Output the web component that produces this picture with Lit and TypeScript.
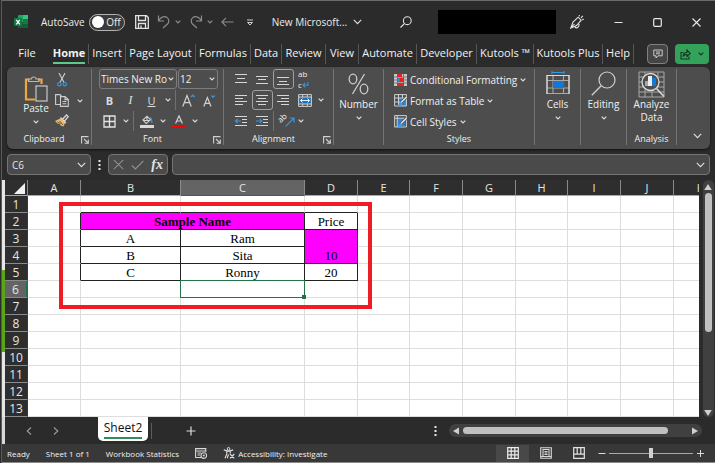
import { LitElement, html, css, svg, nothing } from "lit";
import { customElement, property } from "lit/decorators.js";
import { classMap } from "lit/directives/class-map.js";
import { styleMap } from "lit/directives/style-map.js";

type Art = { w: number; h: number; body: unknown };

const line = (d: string, c = "#d6d6d6", w = 1) =>
  svg`<path d=${d} fill="none" stroke=${c} stroke-width=${w} />`;
const fill = (d: string, c = "#d6d6d6") => svg`<path d=${d} fill=${c} />`;

const ART: Record<string, Art> = {
  excel: { w: 14, h: 14, body: svg`
    <rect x="4" y="0" width="10" height="13" rx="1" fill="#21a366" />
    <rect x="9" y="0" width="5" height="4" fill="#33c481" />
    <rect x="4" y="7" width="10" height="6" rx="1" fill="#185c37" />
    <rect x="9" y="4" width="5" height="5" fill="#107c41" />
    <rect x="0" y="3" width="8" height="8" rx="1" fill="#107c41" />
    ${line("M2.3 4.8 5.8 9.3M5.8 4.8 2.3 9.3", "#fff", 1.3)}` },
  save: { w: 14, h: 14, body: svg`
    ${line("M.7 .7H11.5L13.3 2.5V13.3H.7ZM3.5 .7V5.5H10.5V.7M3.5 13V8.5H10.5V13M6 13V10.5", "#e4e4e4", 1.3)}` },
  undo: { w: 14, h: 14, body: line("M1.5 .5V6H7M1.5 6C4 1.5 8 .8 10.2 2.6 12.5 4.5 12 7.5 10.5 9L6 13", "#8c8c8c", 1.2) },
  redo: { w: 14, h: 14, body: line("M12.5 .5V6H7M12.5 6C10 1.5 6 .8 3.8 2.6 1.5 4.5 2 7.5 3.5 9L8 13", "#8c8c8c", 1.2) },
  back: { w: 13, h: 10, body: line("M5 .8 .9 5 5 9.2M.9 5H12.5", "#8c8c8c", 1.1) },
  custom: { w: 8, h: 7, body: line("M1 1H7M1.5 3.5 4 6 6.5 3.5Z", "#d0d0d0") },
  search: { w: 12, h: 12, body: svg`<circle cx="7.3" cy="4.7" r="3.9" fill="none" stroke="#e0e0e0" stroke-width="1.1" />${line("M4.4 7.6 .5 11.5", "#e0e0e0", 1.2)}` },
  pen: { w: 14, h: 14, body: line("M.8 13 3 7 8.2 2.2 11.2 5.2 6.5 10.5ZM.8 13 4.5 9M4.8 12C6.5 13.8 9.5 12.5 9 9M9 1.2 9.6 0M11 2.8 12.8 .8M12.2 4.6 13.8 4.2", "#e4e4e4", 1.1) },
  min: { w: 9, h: 9, body: line("M.5 4.5H8.5", "#e8e8e8") },
  max: { w: 9, h: 9, body: svg`<rect x=".7" y=".7" width="7.6" height="7.6" rx="1" fill="none" stroke="#e8e8e8" stroke-width="1.2" />` },
  close: { w: 9, h: 9, body: line("M.5 .5 8.5 8.5M8.5 .5 .5 8.5", "#e8e8e8", 1.1) },
  comment: { w: 10, h: 10, body: line("M.8 1H9.2V6.8H5L3 9V6.8H.8ZM3 3H7M3 4.8H7", "#d8d8d8", 0.9) },
  share: { w: 11, h: 11, body: line("M3.5 3.5H1V10H9V7.5M3 7.5C3.5 4.5 5 3.5 7 3.5V1L10.3 4.5 7 7.5V5.5C5.5 5.5 4 6 3 7.5Z", "#14351f", 1.1) },
  paste: { w: 24, h: 26, body: svg`
    ${line("M5.5 3.5H2V23.5H11", "#f0a63c", 2.2)}${line("M14 3.5H17.5V8", "#f0a63c", 2.2)}
    ${line("M4.5 5.5V3H7.5C7.5 .3 12 .3 12 3H15V5.5Z", "#b8b8b8", 1.1)}
    <rect x="12" y="10" width="11" height="15" fill="#4d4d4d" stroke="#c8c8c8" stroke-width="1.2" />` },
  cut: { w: 10, h: 14, body: svg`${line("M2 0 7 9.5M8 0 3 9.5", "#cfcfcf", 1.1)}
    <circle cx="2.3" cy="11.2" r="1.7" fill="none" stroke="#3b96dc" stroke-width="1.2" /><circle cx="7.7" cy="11.2" r="1.7" fill="none" stroke="#3b96dc" stroke-width="1.2" />` },
  copy: { w: 14, h: 13, body: line("M6 10.5H.6V.6H5L7 2.6M5.5 2.6H10L13.3 5.6V12.4H5.5ZM10 2.6V5.6H13.3M7.5 7.5H11.3M7.5 9.8H11.3", "#cdcdcd", 1.1) },
  brush: { w: 14, h: 13, body: svg`${fill("M2 6 6.5 4 10.5 8 8.5 12.6 5.5 11.5 4.5 10 2.5 9.5 0 7Z", "#f0b45a")}
    ${line("M5.5 3.5 11 9M7.5 5.2 11.5 1 13.2 2.6 9.5 7", "#d6d6d6", 1.3)}${line("M2.5 8 6 10M4.5 7 8 11", "#4d4d4d", 0.8)}` },
  launch: { w: 8, h: 8, body: line("M7.5 .6H.6V7.5M3 3 7 7M7.3 3.6V7.3H3.6", "#d0d0d0", 1.1) },
  grow: { w: 13, h: 13, body: svg`${line("M.8 12.5 5 1.5 9.2 12.5M2.3 8.7H7.7", "#d0d0d0", 1.2)}${line("M9 3 10.8 1.2 12.6 3", "#3b96dc", 1.3)}` },
  shrink: { w: 13, h: 13, body: svg`${line("M.8 12.5 4.4 3.5 8 12.5M2.2 9.4H6.6", "#d0d0d0", 1.2)}${line("M8.3 1.5 10 3.2 11.7 1.5", "#3b96dc", 1.3)}` },
  borders: { w: 13, h: 13, body: line("M1 1H12V12H1ZM6.5 1V12M1 6.5H12", "#e4e4e4", 1.3) },
  bucket: { w: 14, h: 13, body: svg`${line("M3 5 7 1.2 10.5 4.8 6.2 8.5ZM7 1.2V5M3 5.5H9.5", "#cfcfcf", 1.1)}
    ${line("M10 2.5C12 3.5 12 5.5 11.8 8", "#3b96dc", 1.3)}<rect x="0" y="10" width="14" height="3" fill="#d8d8d8" />` },
  fontColor: { w: 14, h: 13, body: svg`${line("M3.6 8.5 7 .8 10.4 8.5M4.8 6H9.2", "#d0d0d0", 1.2)}<rect x="0" y="10" width="14" height="3" fill="#f00" />` },
  top: { w: 13, h: 13, body: line("M0 1.5H12M2 5.5H10M0 9.5H12") },
  middle: { w: 13, h: 13, body: line("M0 3.5H12M2 6.5H10M0 10.5H12") },
  bottom: { w: 13, h: 13, body: line("M0 4.5H12M2 8.5H10M0 11.5H12") },
  left: { w: 13, h: 13, body: line("M0 1.5H12M0 4.5H8M0 7.5H12M0 10.5H8") },
  center: { w: 13, h: 13, body: line("M0 1.5H12M2 4.5H10M0 7.5H12M2 10.5H10") },
  right: { w: 13, h: 13, body: line("M0 1.5H12M4 4.5H12M0 7.5H12M4 10.5H12") },
  outdent: { w: 13, h: 13, body: svg`${line("M0 1.5H12M7 4.5H12M7 7.5H12M0 10.5H12")}${line("M2.7 3.8 .5 6 2.7 8.2M.5 6H6", "#3b96dc", 1.2)}` },
  indent: { w: 13, h: 13, body: svg`${line("M0 1.5H12M7 4.5H12M7 7.5H12M0 10.5H12")}${line("M3.8 3.8 6 6 3.8 8.2M0 6H6", "#3b96dc", 1.2)}` },
  wrapArrow: { w: 7, h: 6, body: line("M6 0V3.2H1.2M3.2 1 1 3.2 3.2 5.4", "#3b96dc", 1.1) },
  orientArrow: { w: 10, h: 10, body: line("M.6 9.4 9 1M4.5 1H9V5.5", "#3b96dc", 1.2) },
  merge: { w: 14, h: 13, body: svg`<rect x="0" y="3" width="14" height="7" fill="#1f6fb8" />
    ${line("M.6 .6H13.4V12.4H.6ZM.6 3H13.4M.6 10H13.4M4.7 .6V3M9.3 .6V3M4.7 10V12.4M9.3 10V12.4", "#cfcfcf")}
    ${line("M4.5 4.5 2.5 6.5 4.5 8.5M9.5 4.5 11.5 6.5 9.5 8.5M2.5 6.5H11.5", "#e8f3ff")}` },
  percent: { w: 21, h: 24, body: svg`<ellipse cx="5" cy="8" rx="3.8" ry="4.8" fill="none" stroke="#cfcfcf" stroke-width="1.3" />
    <ellipse cx="16" cy="18" rx="3.8" ry="4.8" fill="none" stroke="#cfcfcf" stroke-width="1.3" />${line("M16.5 3 4.5 23", "#cfcfcf", 1.3)}` },
  conditional: { w: 13, h: 12, body: svg`<rect x="0" y="0" width="13" height="12" fill="#c9c9c9" />
    ${line("M0 3H13M0 6H13M0 9H13M3.5 0V12M9.5 0V12", "#666", 0.8)}
    <rect x="3" y="0" width="5" height="3" fill="#f21d1d" /><rect x="3" y="4" width="3" height="4" fill="#2a7fd0" /><rect x="6" y="4" width="4" height="4" fill="#f21d1d" /><rect x="3" y="9" width="7" height="3" fill="#f21d1d" />` },
  tableStyle: { w: 13, h: 13, body: svg`<rect x="4" y="4" width="9" height="8" fill="#2a84d6" />
    ${line("M.6 .6H12.4V12H.6ZM.6 4H12.4M.6 8H7M4.5 .6V12M8.5 .6V4", "#d0d0d0")}${line("M12.6 3 6.5 9", "#4d4d4d", 3)}${line("M12.6 3 6.5 9", "#e4e4e4", 1.5)}${fill("M6.8 7.8 8.4 9.8C7.5 12.5 5 12.8 3 12.4 5 11.5 4.8 8.5 6.8 7.8Z", "#3f9bea")}` },
  cellStyle: { w: 13, h: 13, body: svg`<rect x="3" y="3" width="8" height="8" fill="#2a84d6" />
    ${line("M.6 .6H12.4V12H.6ZM.6 3.2H12.4M3.2 .6V12", "#d0d0d0")}${line("M12.6 3 6.5 9", "#4d4d4d", 3)}${line("M12.6 3 6.5 9", "#e4e4e4", 1.5)}${fill("M6.8 7.8 8.4 9.8C7.5 12.5 5 12.8 3 12.4 5 11.5 4.8 8.5 6.8 7.8Z", "#3f9bea")}` },
  cells: { w: 24, h: 23, body: svg`${line("M6 1.5H18M6 0V3M18 0V3", "#3b96dc", 1.1)}
    ${line("M1 4.5H23V22.5H1ZM1 9.5H23M1 17H23M7 4.5V22.5M17.5 4.5V22.5", "#a8a8a8", 1.1)}${line("M1 4V23M23 4V23M1 4.5H23", "#dadada", 1.2)}
    <rect x="7" y="10" width="11" height="7" fill="#1178d4" />` },
  editing: { w: 25, h: 25, body: svg`<circle cx="16" cy="9" r="8" fill="none" stroke="#cfcfcf" stroke-width="1.2" />${line("M10.2 14.8 .8 24.2", "#cfcfcf", 1.3)}` },
  analyze: { w: 27, h: 27, body: svg`${line("M1 1H26V26H1ZM1 6H26M1 16H6M18 16H26M1 21H26M7 18V26M14 21V26M20 1V5M7 1V5M1 11H5M21 11H26", "#a8a8a8", 1)}
    <circle cx="12.5" cy="11" r="8.5" fill="#4d4d4d" stroke="#dcdcdc" stroke-width="1.3" />${line("M18.5 17.5 26 25.5", "#dcdcdc", 1.5)}
    <rect x="7" y="10" width="3" height="5" fill="#a8a8a8" /><rect x="10" y="5" width="4" height="10" fill="#ededed" /><rect x="14" y="7" width="4" height="8" fill="#1178d4" />` },
  chevron: { w: 6, h: 4, body: line("M.7 .7 3 3 5.3 .7", "#dcdcdc", 1.2) },
  dimChevron: { w: 6, h: 4, body: line("M.7 .7 3 3 5.3 .7", "#8c8c8c", 1.2) },
  darkChevron: { w: 6, h: 4, body: line("M.7 .7 3 3 5.3 .7", "#14351f", 1.2) },
  wideChevron: { w: 9, h: 6, body: line("M.8 .8 4.5 4.6 8.2 .8", "#dcdcdc", 1.2) },
  cancel: { w: 11, h: 11, body: line("M.8 .8 10.2 10.2M10.2 .8 .8 10.2", "#8f8f8f", 1.1) },
  accept: { w: 13, h: 10, body: line("M.8 5.5 4.4 9 12.4 .8", "#8f8f8f", 1.2) },
  dots: { w: 3, h: 10, body: fill("M.5 0h2v2h-2zM.5 4h2v2h-2zM.5 8h2v2h-2z", "#e8e8e8") },
  prev: { w: 6, h: 8, body: line("M5 .5 1.2 4 5 7.5", "#9a9a9a", 1.1) },
  next: { w: 6, h: 8, body: line("M1 .5 4.8 4 1 7.5", "#9a9a9a", 1.1) },
  plus: { w: 10, h: 10, body: line("M5 .5V9.5M.5 5H9.5", "#dcdcdc", 1.2) },
  zoomOut: { w: 8, h: 8, body: line("M.5 4.5H7.5", "#dcdcdc") },
  zoomIn: { w: 8, h: 8, body: line("M4.5 1V8M1 4.5H8", "#dcdcdc") },
  triLeft: { w: 6, h: 8, body: fill("M6 .5V7.5L0 4Z", "#cfcfcf") },
  triRight: { w: 6, h: 8, body: fill("M0 .5V7.5L6 4Z", "#cfcfcf") },
  triUp: { w: 8, h: 6, body: fill("M4 0 7.8 6H.2Z", "#cfcfcf") },
  triDown: { w: 8, h: 6, body: fill("M4 6 7.8 0H.2Z", "#cfcfcf") },
  corner: { w: 11, h: 11, body: fill("M11 0V11H0Z", "#f2f2f2") },
  macro: { w: 12, h: 11, body: svg`${line("M6 9.5H.6V.6H10.8V4M.6 3H10.8M2.5 5H6M2.5 7H5", "#d8d8d8", 1.1)}<circle cx="8.8" cy="7.6" r="2.8" fill="none" stroke="#d8d8d8" stroke-width="1.1" /><circle cx="8.8" cy="7.6" r="1" fill="#d8d8d8" />` },
  access: { w: 12, h: 12, body: svg`<circle cx="5.5" cy="1.8" r="1.3" fill="none" stroke="#e0e0e0" />${line("M.8 2.8C3 4.5 8 4.5 10.2 2.8M3.8 4.2V7L2 11.3M7.2 4.2V6.5M5.5 7.5 4.2 11.3M7 7 11.3 11.3M11.3 7 7 11.3", "#e0e0e0", 1.1)}` },
  normalView: { w: 12, h: 12, body: line("M.7 .7H11.3V11.3H.7ZM.7 4.2H11.3M.7 7.8H11.3M4.2 .7V11.3M7.8 .7V11.3", "#ececec", 1.2) },
  pageView: { w: 12, h: 12, body: line("M.7 .7H11.3V11.3H.7ZM3 2.5H9V9.5H3ZM4.5 4.5H7.5M4.5 6H7.5M4.5 7.5H7.5M.7 9.5H3M9 9.5H11.3", "#d8d8d8", 1.1) },
  breakView: { w: 12, h: 12, body: line("M.7 .7H11.3V11.3H.7ZM4.2 .7V7.2M7.8 .7V7.2M.7 7.2H11.3", "#e4e4e4", 1.2) },
};

const art = (name: string) => {
  const a = ART[name];
  return html`<svg class="art" width=${a.w} height=${a.h} viewBox="0 0 ${a.w} ${a.h}" aria-hidden="true">${a.body}</svg>`;
};

const SHARED = css`
  :host, * { box-sizing: border-box; }
  button, input, select { font: inherit; color: inherit; background: none; border: 0; padding: 0; margin: 0; outline: none; }
  button { display: flex; align-items: center; justify-content: center; white-space: nowrap; }
  .art { display: block; flex: none; }
`;

@customElement("title-bar")
class TitleBar extends LitElement {
  static styles = [SHARED, css`
    :host { display: flex; align-items: center; height: 38px; padding: 0 14px 0 12px; font-size: 10px; color: #ececec; }
    .auto { display: flex; align-items: center; gap: 4px; margin-left: 13px; }
    .switch { display: grid; grid-template-columns: 1fr; align-items: center; width: 36px; height: 17px; border: 1px solid #b4b4b4; border-radius: 9px; background: #3a3a3a; }
    .switch > * { grid-area: 1 / 1; }
    .switch input { appearance: none; width: 12px; height: 12px; margin-left: 2px; border-radius: 50%; background: #fff; }
    .switch span { justify-self: end; padding-right: 3px; }
    .quick { display: flex; align-items: center; margin-left: 10px; gap: 4px; }
    .quick .gap { margin-left: 4px; }
    .quick .far { margin-left: 8px; }
    .doc { margin-left: 18px; gap: 6px; }
    .find { margin-left: 38px; }
    .account { flex: 0 1 118px; height: 24px; margin-left: 26px; background: #000; }
    .window { display: flex; align-items: center; gap: 30px; margin-left: auto; }
  `];
  render() {
    return html`
      ${art("excel")}
      <label class="auto"><span>AutoSave</span>
        <span class="switch"><input type="checkbox" aria-label="AutoSave" /><span>Off</span></span>
      </label>
      <div class="quick">
        <button aria-label="Save">${art("save")}</button>
        <button class="gap" aria-label="Undo">${art("undo")}</button>
        <button aria-label="Undo list">${art("dimChevron")}</button>
        <button class="gap" aria-label="Redo">${art("redo")}</button>
        <button aria-label="Redo list">${art("dimChevron")}</button>
        <button class="gap" aria-label="Back">${art("back")}</button>
        <button class="far" aria-label="Customize">${art("custom")}</button>
      </div>
      <button class="doc">New Microsoft... ${art("wideChevron")}</button>
      <button class="find" aria-label="Search">${art("search")}</button>
      <div class="account"></div>
      <div class="window">
        <button aria-label="Drawing">${art("pen")}</button>
        <button aria-label="Minimize">${art("min")}</button>
        <button aria-label="Maximize">${art("max")}</button>
        <button aria-label="Close">${art("close")}</button>
      </div>`;
  }
}

const TABS: [string, number][] = [
  ["File", 45], ["Home", 39], ["Insert", 37], ["Page Layout", 70], ["Formulas", 55], ["Data", 31], ["Review", 44],
  ["View", 33], ["Automate", 58], ["Developer", 60], ["Kutools ™", 57], ["Kutools Plus", 69], ["Help", 31],
];

@customElement("tab-strip")
class TabStrip extends LitElement {
  static styles = [SHARED, css`
    :host { display: flex; align-items: center; height: 26px; padding: 0 6px 0 3px; font-size: 11px; color: #f2f2f2; }
    nav { display: flex; }
    .tab { height: 20px; border-right: 1px solid #565656; }
    .tab span { border-bottom: 2px solid transparent; line-height: 18px; }
    .file { border-color: transparent; }
    .home span { font-weight: 700; border-color: #5fc98c; }
    .tools { display: flex; gap: 7px; margin-left: auto; }
    .comment { width: 21px; height: 20px; border: 1px solid #808080; border-radius: 4px; background: #454545; }
    .share { width: 34px; height: 20px; gap: 7px; border-radius: 4px; background: #33a35c; }
  `];
  render() {
    return html`
      <nav>${TABS.map(([name, w]) => html`
        <button class=${classMap({ tab: true, file: name === "File", home: name === "Home" })}
          style=${styleMap({ width: `${w}px` })}><span>${name}</span></button>`)}</nav>
      <div class="tools">
        <button class="comment" aria-label="Comments">${art("comment")}</button>
        <button class="share" aria-label="Share">${art("share")}${art("darkChevron")}</button>
      </div>`;
  }
}

@customElement("ribbon-bar")
class RibbonBar extends LitElement {
  static styles = [SHARED, css`
    :host { display: flex; margin: 0 5px; height: 82px; border-radius: 6px; background: #4d4d4d; padding: 2px 0 4px; font-size: 10px; color: #f0f0f0; box-shadow: 0 1px 2px #111; }
    .group { position: relative; display: flex; flex-direction: column; justify-content: space-between; border-right: 1px solid #747474; }
    .caption { display: block; text-align: center; font-size: 9px; line-height: 12px; }
    .side { padding-right: 10px; }
    .launch { position: absolute; right: 2px; bottom: 1px; }
    .clip { width: 85px; }
    .font { width: 132px; }
    .align { width: 110px; }
    .narrow { width: 46px; }
    .number { width: 50px; }
    .styles { width: 151px; }
    .analysis { width: 50px; }
    .more { flex: 1; display: flex; align-items: flex-end; justify-content: center; padding: 0 0 6px 8px; }
    .clipbody { display: flex; gap: 6px; padding: 4px 0 0 16px; }
    .big { flex-direction: column; line-height: 13px; }
    .big > .art:last-child { margin-top: 5px; }
    .paste { width: 26px; }
    .stack { display: flex; flex-direction: column; align-items: flex-start; gap: 7px; }
    .stack button { min-width: 14px; }
    .row { display: flex; align-items: center; }
    .pair { gap: 4px; }
    .fontbody { display: grid; gap: 1px; padding-left: 7px; }
    .picks { display: flex; gap: 1px; }
    .pick { display: flex; align-items: center; height: 20px; border: 1px solid #7d7d7d; border-radius: 3px; padding: 0 2px 0 1px; }
    .pick select { appearance: none; flex: 1; min-width: 0; }
    .face { width: 78px; }
    .size { width: 40px; }
    .tools { height: 20px; }
    .letter { width: 21px; color: #dcdcdc; font-size: 11px; }
    .bold { font-weight: 700; }
    .italic { font-family: "Liberation Serif", serif; font-style: italic; font-size: 13px; }
    .under { text-decoration: underline; }
    .bar { width: 1px; height: 20px; background: #707070; }
    .tools .bar { margin: 0 2px; }
    .cell { width: 21px; height: 20px; border: 1px solid transparent; border-radius: 3px; }
    .on { border-color: #a0a0a0; }
    .drop1 { width: 11px; }
    .alignbody { display: grid; gap: 1px; padding-left: 7px; }
    .alignbody .row { height: 20px; }
    .wrap { display: grid; font-size: 8px; line-height: 11px; text-align: left; margin-left: 4px; }
    .wrap span { display: flex; align-items: center; }
    .orient { position: relative; width: 18px; height: 18px; margin-left: 3px; }
    .orient span { position: absolute; left: 0; top: 1px; font-size: 8px; line-height: 9px; transform: rotate(-45deg); }
    .orient .art { position: absolute; right: 0; bottom: 3px; }
    .tall { width: 100%; padding-top: 2px; }
    .lead { height: 27px; }
    .stylelist { display: flex; flex-direction: column; align-items: flex-start; padding-left: 10px; }
    .style { height: 21px; gap: 3px; }
  `];
  render() {
    const cell = (icon: string, label: string, on = false) =>
      html`<button class=${classMap({ cell: true, on })} aria-label=${label}>${art(icon)}</button>`;
    const drop = (label: string) => html`<button class="drop1" aria-label=${label}>${art("chevron")}</button>`;
    const launch = (label: string) => html`<button class="launch" aria-label=${label}>${art("launch")}</button>`;
    const tall = (icon: string, label: string) =>
      html`<button class="big tall"><span class="lead">${art(icon)}</span><span>${label}</span>${art("chevron")}</button>`;
    return html`
      <section class="group clip">
        <div class="clipbody">
          <button class="big paste">${art("paste")}<span>Paste</span>${art("chevron")}</button>
          <div class="stack">
            <button aria-label="Cut">${art("cut")}</button>
            <div class="row pair"><button aria-label="Copy">${art("copy")}</button>${drop("Copy options")}</div>
            <button aria-label="Format Painter">${art("brush")}</button>
          </div>
        </div>
        <span class="caption side">Clipboard</span>${launch("Clipboard settings")}
      </section>
      <section class="group font">
        <div class="fontbody">
          <div class="picks">
            <label class="pick face"><select aria-label="Font"><option>Times New Ro</option></select>${art("chevron")}</label>
            <label class="pick size"><select aria-label="Font size"><option>12</option></select>${art("chevron")}</label>
          </div>
          <div class="row tools">
            <button class="letter bold">B</button><button class="letter italic">I</button><button class="letter under">U</button>
            ${drop("Underline options")}<span class="bar"></span>
            ${cell("grow", "Increase Font Size")}${cell("shrink", "Decrease Font Size")}
          </div>
          <div class="row tools">
            ${cell("borders", "Borders")}${drop("Border options")}<span class="bar"></span>
            ${cell("bucket", "Fill Color")}${drop("Fill options")}${cell("fontColor", "Font Color")}${drop("Font color options")}
          </div>
        </div>
        <span class="caption side">Font</span>${launch("Font settings")}
      </section>
      <section class="group align">
        <div class="alignbody">
          <div class="row">${cell("top", "Top Align")}${cell("middle", "Middle Align")}${cell("bottom", "Bottom Align", true)}
            <button class="wrap" aria-label="Wrap Text"><span>ab</span><span>c${art("wrapArrow")}</span></button></div>
          <div class="row">${cell("left", "Align Left")}${cell("center", "Center", true)}${cell("right", "Align Right")}
            ${cell("merge", "Merge and Center")}${drop("Merge options")}</div>
          <div class="row">${cell("outdent", "Decrease Indent")}${cell("indent", "Increase Indent")}<span class="bar"></span>
            <button class="orient" aria-label="Orientation"><span>ab</span>${art("orientArrow")}</button>${drop("Orientation options")}</div>
        </div>
        <span class="caption side">Alignment</span>${launch("Alignment settings")}
      </section>
      <section class="group number">${tall("percent", "Number")}</section>
      <section class="group styles">
        <div class="stylelist">
          <button class="style">${art("conditional")}<span>Conditional Formatting</span>${art("chevron")}</button>
          <button class="style">${art("tableStyle")}<span>Format as Table</span>${art("chevron")}</button>
          <button class="style">${art("cellStyle")}<span>Cell Styles</span>${art("chevron")}</button>
        </div>
        <span class="caption">Styles</span>
      </section>
      <section class="group narrow">${tall("cells", "Cells")}</section>
      <section class="group narrow">${tall("editing", "Editing")}</section>
      <section class="group analysis"><button class="big tall"><span class="lead">${art("analyze")}</span><span>Analyze<br />Data</span></button>
        <span class="caption">Analysis</span></section>
      <div class="more"><button aria-label="Ribbon options">${art("wideChevron")}</button></div>`;
  }
}

@customElement("formula-bar")
class FormulaBar extends LitElement {
  static styles = [SHARED, css`
    :host { display: flex; align-items: center; gap: 4px; margin: 5px 5px 0; font-size: 10px; color: #e4e4e4; }
    .box { display: flex; align-items: center; height: 21px; border: 1px solid #757575; border-radius: 4px; background: #4a4a4a; padding: 0 4px; }
    .name { width: 84px; }
    .box input { flex: 1; min-width: 0; }
    .keys { width: 60px; justify-content: space-between; padding: 0 4px; }
    .fx { font: italic 700 14px "Liberation Serif", serif; }
    .formula { flex: 1; }
    .dots { margin: 0 3px; }
  `];
  render() {
    return html`
      <div class="box name"><input aria-label="Name Box" value="C6" />${art("wideChevron")}</div>
      <span class="dots">${art("dots")}</span>
      <div class="box keys">
        <button aria-label="Cancel">${art("cancel")}</button><button aria-label="Enter">${art("accept")}</button><button class="fx">fx</button>
      </div>
      <div class="box formula"><input aria-label="Formula" />${art("wideChevron")}</div>`;
  }
}

const COLUMNS: [string, number][] = [
  ["A", 53], ["B", 100], ["C", 124], ["D", 53], ["E", 52], ["F", 53], ["G", 53], ["H", 52], ["I", 53], ["J", 53], ["K", 53],
];
type Cell = { text?: string; span?: number; cls?: string };
const CELLS: Record<string, Cell> = {
  B1: { cls: "under" }, C1: { cls: "under" }, D1: { cls: "under" },
  A2: { cls: "edge" }, A3: { cls: "edge" }, A4: { cls: "edge" }, A5: { cls: "edge" },
  B2: { text: "Sample Name", span: 2, cls: "data pink title" }, D2: { text: "Price", cls: "data" },
  B3: { text: "A", cls: "data" }, C3: { text: "Ram", cls: "data" }, D3: { cls: "data pink open" },
  B4: { text: "B", cls: "data" }, C4: { text: "Sita", cls: "data" }, D4: { text: "10", cls: "data pink" },
  B5: { text: "C", cls: "data" }, C5: { text: "Ronny", cls: "data" }, D5: { text: "20", cls: "data" },
  C6: { cls: "active" },
};

@customElement("sheet-grid")
class SheetGrid extends LitElement {
  @property({ type: Number }) rows = 13;
  static styles = [SHARED, css`
    :host { display: flex; margin-top: 5px; background: #2b2b2b; }
    .strip { flex: none; width: 3px; display: flex; flex-direction: column; background: #e6e6e6; }
    .mark { height: 82px; margin-top: 90px; background: #58a618; }
    .view { position: relative; flex: 1; min-width: 0; overflow: hidden; background: #fff; }
    table { table-layout: fixed; border-collapse: separate; border-spacing: 0; height: 237px; }
    th, td { padding: 0; line-height: 15px; overflow: hidden; }
    th { background: #2e2e2e; color: #e6e6e6; font-size: 11px; font-weight: 400; height: 15px; border-right: 1px solid #8a8a8a; }
    thead th { border-bottom: 1px solid #a8a8a8; }
    thead .art { margin: 1px 1px 0 9px; }
    tbody th { border-right-color: #3a3a3a; border-bottom: 1px solid #8a8a8a; font-size: 12px; }
    thead .here { background: #646464; border-bottom-color: #217346; }
    tbody .here { background: #646464; border-right: 2px solid #217346; }
    td { height: 17px; border-right: 1px solid #dedede; border-bottom: 1px solid #dedede; font-family: "Liberation Serif", serif; font-size: 13px; color: #000; text-align: center; }
    .data { border-color: #222; }
    .pink { background: #f0f; }
    .title { font-weight: 700; }
    .open { border-bottom-color: #f0f; }
    .edge { border-right-color: #222; }
    .under { border-bottom-color: #222; }
    .active { position: relative; overflow: visible; }
    .active::before { content: ""; position: absolute; inset: -1px; border: 1px solid #217346; }
    .active::after { content: ""; position: absolute; right: -2px; bottom: -2px; width: 4px; height: 4px; background: #217346; }
    .callout { position: absolute; left: 54px; top: 22px; width: 313px; height: 107px; border: 4px solid #ee1c25; pointer-events: none; }
    .scroll { flex: none; width: 16px; display: flex; flex-direction: column; align-items: center; background: #2b2b2b; padding: 0 0 0 2px; }
    .track { flex: 1; width: 11px; border-radius: 6px; background: #404040; display: flex; flex-direction: column; align-items: center; padding: 4px 0 1px; }
    .thumb { width: 7px; height: 139px; margin: 3px 0 auto; border-radius: 4px; background: #c0c0c0; }
  `];
  render() {
    const rows = Array.from({ length: this.rows }, (_, i) => i + 1);
    return html`
      <div class="strip"><div class="mark"></div></div>
      <div class="view">
        <table style=${styleMap({ width: `${COLUMNS.reduce((s, c) => s + c[1], 23)}px` })}>
          <colgroup><col style="width:23px" />${COLUMNS.map(([, w]) => html`<col style=${styleMap({ width: `${w}px` })} />`)}</colgroup>
          <thead><tr><th>${art("corner")}</th>${COLUMNS.map(([n]) => html`<th class=${n === "C" ? "here" : ""}>${n}</th>`)}</tr></thead>
          <tbody>${rows.map((r) => html`<tr>
            <th class=${r === 6 ? "here" : ""}>${r}</th>
            ${COLUMNS.map(([n], i) => {
              if (i > 0 && CELLS[COLUMNS[i - 1][0] + r]?.span) return nothing;
              const c = CELLS[n + r] ?? {};
              return html`<td class=${c.cls ?? ""} colspan=${c.span ?? 1}>${c.text ?? ""}</td>`;
            })}</tr>`)}</tbody>
        </table>
        <div class="callout"></div>
      </div>
      <div class="scroll"><div class="track">${art("triUp")}<div class="thumb"></div>${art("triDown")}</div></div>`;
  }
}

@customElement("sheet-tabs")
class SheetTabs extends LitElement {
  static styles = [SHARED, css`
    :host { display: flex; align-items: center; height: 27px; padding: 0 13px 0 21px; color: #111; border-left: 3px solid #d8d8d8; }
    .arrows { display: flex; gap: 21px; }
    .sheet { align-self: flex-start; width: 50px; height: 24px; margin-left: 39px; border-radius: 0 0 5px 5px; background: #fff; font-size: 12px; }
    .sheet span { border-bottom: 2px solid #2f8f56; line-height: 18px; }
    .bar { width: 1px; height: 16px; margin-left: 3px; background: #5c5c5c; }
    .add { margin-left: 34px; }
    .end { display: flex; align-items: center; gap: 12px; flex: 0 0 268px; margin-left: auto; }
    .track { flex: 1; display: flex; align-items: center; height: 13px; border-radius: 7px; background: #404040; padding: 0 4px; gap: 4px; }
    .thumb { flex: 0 1 205px; height: 7px; border-radius: 4px; background: #c0c0c0; }
    .track .art:last-child { margin-left: auto; }
  `];
  render() {
    return html`
      <div class="arrows"><button aria-label="Previous sheet">${art("prev")}</button><button aria-label="Next sheet">${art("next")}</button></div>
      <button class="sheet"><span>Sheet2</span></button><span class="bar"></span>
      <button class="add" aria-label="New sheet">${art("plus")}</button>
      <div class="end">${art("dots")}<div class="track">${art("triLeft")}<div class="thumb"></div>${art("triRight")}</div></div>`;
  }
}

@customElement("status-bar")
class StatusBar extends LitElement {
  static styles = [SHARED, css`
    :host { display: flex; align-items: center; height: 19px; padding: 0 11px 0 5px; gap: 16px; font-size: 8px; color: #f2f2f2; background: #383838; border-bottom: 1px solid #8a8a8a; }
    span { white-space: nowrap; }
    .access { gap: 3px; }
    .views { display: flex; margin-left: auto; }
    .view { width: 33px; height: 17px; }
    .on { background: #484848; }
    .zoom { display: flex; align-items: center; gap: 3px; margin-left: -13px; }
    input { appearance: none; width: 84px; height: 10px; background: linear-gradient(#aaa, #aaa) center / 100% 1px no-repeat; }
    input::-webkit-slider-thumb { appearance: none; width: 4px; height: 10px; background: #d0d0d0; }
  `];
  render() {
    return html`
      <span>Ready</span><span>Sheet 1 of 1</span><span>Workbook Statistics</span>
      <button aria-label="Record Macro">${art("macro")}</button>
      <button class="access">${art("access")}Accessibility: Investigate</button>
      <div class="views">
        <button class="view on" aria-label="Normal">${art("normalView")}</button>
        <button class="view" aria-label="Page Layout">${art("pageView")}</button>
        <button class="view" aria-label="Page Break Preview">${art("breakView")}</button>
      </div>
      <div class="zoom">
        <button aria-label="Zoom out">${art("zoomOut")}</button>
        <input type="range" aria-label="Zoom" min="0" max="100" value="50" />
        <button aria-label="Zoom in">${art("zoomIn")}</button>
      </div>`;
  }
}

@customElement("app-root")
class AppRoot extends LitElement {
  static styles = css`
    :host { display: block; min-height: 100vh; box-sizing: border-box; padding-left: 1px; background: #2b2b2b; font-family: "Open Sans", "Noto Sans", sans-serif; }
    .frame { border-left: 1px solid #5a5a5a; border-top: 1px solid #6a6a6a; padding-top: 2px; }
  `;
  render() {
    return html`<div class="frame">
      <title-bar></title-bar>
      <tab-strip></tab-strip>
      <ribbon-bar></ribbon-bar>
      <formula-bar></formula-bar>
      <sheet-grid></sheet-grid>
      <sheet-tabs></sheet-tabs>
      <status-bar></status-bar>
    </div>`;
  }
}
